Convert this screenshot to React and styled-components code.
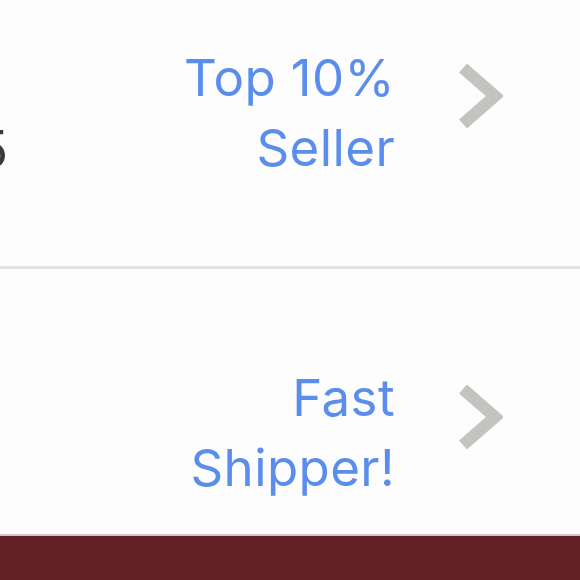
import React from 'react';
import styled, { createGlobalStyle } from 'styled-components';

const Global = createGlobalStyle`
  html, body {
    margin: 0;
    padding: 0;
    background: #fdfdfd;
    overflow: hidden;
  }
`;

// 뱃지 목록 (잘려 보이는 화면)
const badges = [
  { id: 1, lines: ['Top 10%', 'Seller'], side: '5' },
  { id: 2, lines: ['Fast', 'Shipper!'] },
];

const Chevron = () => (
  <svg width="46" height="64" viewBox="0 0 46 64">
    <path d="M6 4 L38 32 L6 60" fill="none" stroke="#c3c3bf" strokeWidth="12" />
  </svg>
);

const App = () => {
  return (
    <React.Fragment>
      <Global />
      <Wrap>
        {badges.map((b, i) => (
          <Row key={b.id} first={i === 0}>
            <Side>{b.side && <SideText>{b.side}</SideText>}</Side>
            <Label>
              {b.lines.map((l) => (
                <div key={l}>{l}</div>
              ))}
            </Label>
            <Arrow first={i === 0}>
              <Chevron />
            </Arrow>
          </Row>
        ))}
        <Footer />
      </Wrap>
    </React.Fragment>
  );
};

const Wrap = styled.div`
  width: 580px;
  height: 580px;
  display: flex;
  flex-direction: column;
  font-family: Inter, Lato, sans-serif;
`;

const Row = styled.div`
  height: ${(p) => (p.first ? '269px' : '267px')};
  display: flex;
  align-items: flex-start;
  padding: ${(p) => (p.first ? '43px' : '94px')} 77px 0 0;
  box-sizing: border-box;
  border-bottom: ${(p) => (p.first ? '3px solid #e7e3df' : '2px solid #cfcbc8')};
`;

const Side = styled.div`
  width: 8px;
  display: flex;
  justify-content: flex-end;
  overflow: hidden;
  align-self: flex-start;
  margin-top: 72px;
`;

const SideText = styled.span`
  font-size: 52px;
  color: #3a3a3a;
  line-height: 70px;
`;

const Label = styled.div`
  flex: 1;
  text-align: right;
  color: #5a8dec;
  font-size: 51px;
  line-height: 70px;
  letter-spacing: 0.4px;
`;

const Arrow = styled.div`
  margin-left: 62px;
  margin-top: ${(p) => (p.first ? '21px' : '22px')};
  display: flex;
`;

const Footer = styled.div`
  flex: 1;
  background: #651f26;
`;

export default App;
